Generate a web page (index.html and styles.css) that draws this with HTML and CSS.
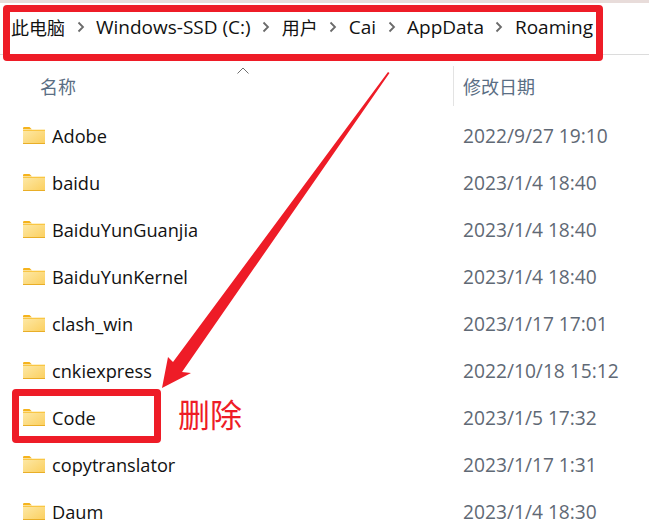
FILE: index.html
```html
<!DOCTYPE html>
<html>

<head>
    <title>Roaming</title>
    <link rel="stylesheet" href="styles.css">
</head>

<body>
    <div class="window">
        <div class="top-strip"></div>
        <div class="breadcrumb">
            <span class="crumb-cjk">此电脑</span>
            <svg class="crumb-sep" viewBox="0 0 8 12"><path d="M1.5 1.5L6 6L1.5 10.5"/></svg>
            <span>Windows-SSD (C:)</span>
            <svg class="crumb-sep" viewBox="0 0 8 12"><path d="M1.5 1.5L6 6L1.5 10.5"/></svg>
            <span class="crumb-cjk">用户</span>
            <svg class="crumb-sep" viewBox="0 0 8 12"><path d="M1.5 1.5L6 6L1.5 10.5"/></svg>
            <span>Cai</span>
            <svg class="crumb-sep" viewBox="0 0 8 12"><path d="M1.5 1.5L6 6L1.5 10.5"/></svg>
            <span>AppData</span>
            <svg class="crumb-sep" viewBox="0 0 8 12"><path d="M1.5 1.5L6 6L1.5 10.5"/></svg>
            <span>Roaming</span>
        </div>

        <div class="list-header">
            <div class="col-name">名称</div>
            <div class="col-date">修改日期</div>
        </div>

        <div class="file-list">
            <div class="file-row">
                <div class="file-name"><svg class="folder" viewBox="0 0 22 17"><use href="#folder-icon"/></svg>Adobe</div>
                <div class="file-date">2022/9/27 19:10</div>
            </div>
            <div class="file-row">
                <div class="file-name"><svg class="folder" viewBox="0 0 22 17"><use href="#folder-icon"/></svg>baidu</div>
                <div class="file-date">2023/1/4 18:40</div>
            </div>
            <div class="file-row">
                <div class="file-name"><svg class="folder" viewBox="0 0 22 17"><use href="#folder-icon"/></svg>BaiduYunGuanjia</div>
                <div class="file-date">2023/1/4 18:40</div>
            </div>
            <div class="file-row">
                <div class="file-name"><svg class="folder" viewBox="0 0 22 17"><use href="#folder-icon"/></svg>BaiduYunKernel</div>
                <div class="file-date">2023/1/4 18:40</div>
            </div>
            <div class="file-row">
                <div class="file-name"><svg class="folder" viewBox="0 0 22 17"><use href="#folder-icon"/></svg>clash_win</div>
                <div class="file-date">2023/1/17 17:01</div>
            </div>
            <div class="file-row">
                <div class="file-name"><svg class="folder" viewBox="0 0 22 17"><use href="#folder-icon"/></svg>cnkiexpress</div>
                <div class="file-date">2022/10/18 15:12</div>
            </div>
            <div class="file-row">
                <div class="file-name"><svg class="folder" viewBox="0 0 22 17"><use href="#folder-icon"/></svg>Code</div>
                <div class="file-date">2023/1/5 17:32</div>
            </div>
            <div class="file-row">
                <div class="file-name"><svg class="folder" viewBox="0 0 22 17"><use href="#folder-icon"/></svg>copytranslator</div>
                <div class="file-date">2023/1/17 1:31</div>
            </div>
            <div class="file-row">
                <div class="file-name"><svg class="folder" viewBox="0 0 22 17"><use href="#folder-icon"/></svg>Daum</div>
                <div class="file-date">2023/1/4 18:30</div>
            </div>
        </div>

        <!-- sort arrow -->
        <svg class="sort-arrow" viewBox="0 0 12 7"><path d="M0.5 6.5L6 1L11.5 6.5"/></svg>

        <!-- red annotations drawn on top of the screenshot -->
        <div class="mark mark-path"></div>
        <div class="mark mark-code"></div>
        <div class="delete-note">删除</div>
        <svg class="pointer" viewBox="0 0 649 525">
            <path d="M389.5 73L182 372L191 373L162 388L168 357L173 362L388 72Z"/>
        </svg>
    </div>

    <svg class="icon-defs" width="0" height="0">
        <defs>
            <linearGradient id="folder-fill" x1="0" y1="0" x2="1" y2="1">
                <stop offset="0" stop-color="#fde9a8"/>
                <stop offset="1" stop-color="#fbcf5e"/>
            </linearGradient>
            <symbol id="folder-icon" viewBox="0 0 22 17">
                <path d="M0 1.2Q0 0 1.2 0H6.5L9 2.5H0Z" fill="#f5b31d"/>
                <rect x="0" y="2.5" width="22" height="14.5" fill="url(#folder-fill)"/>
                <rect x="0" y="3" width="22" height="1" fill="#f9c644"/>
                <rect x="0" y="16" width="22" height="1" fill="#e9ae27"/>
            </symbol>
        </defs>
    </svg>
</body>
</html>
```

FILE: styles.css
```css
html,
body {
    margin: 0;
    padding: 0;
    background-color: #ffffff;
}

.window {
    position: relative;
    width: 649px;
    height: 525px;
    overflow: hidden;
    font-family: "Open Sans", "Noto Sans CJK SC", sans-serif;
    color: #111111;
}

.top-strip {
    height: 3px;
    background-color: #e8dcda;
}

.breadcrumb {
    display: flex;
    align-items: center;
    gap: 11.5px;
    box-sizing: border-box;
    height: 52px;
    padding-left: 11px;
    padding-bottom: 3px;
    border-bottom: 1px solid #dcdcdc;
    font-size: 19px;
    white-space: nowrap;
}

.crumb-cjk {
    font-size: 18px;
}

.crumb-sep {
    width: 8px;
    height: 12px;
    flex: none;
}

.crumb-sep path {
    fill: none;
    stroke: #6a6a6a;
    stroke-width: 1.8;
}

.list-header {
    display: flex;
    align-items: center;
    box-sizing: border-box;
    height: 57px;
    padding-top: 5px;
    font-size: 18px;
    color: #5a6e84;
}

.col-name {
    width: 413px;
    padding-left: 40px;
}

.col-date {
    display: flex;
    align-items: center;
    height: 40px;
    padding-left: 9px;
    border-left: 1px solid #e3e3e3;
}

.file-row {
    display: flex;
    align-items: center;
    height: 47px;
    font-size: 18.2px;
}

.file-name {
    display: flex;
    align-items: center;
    gap: 7px;
    width: 440px;
    padding-left: 23px;
}

.file-date {
    font-size: 19.2px;
    color: #5f6975;
}

.folder {
    width: 22px;
    height: 17px;
    flex: none;
}

.icon-defs {
    position: absolute;
}

.sort-arrow {
    position: absolute;
    left: 237px;
    top: 67px;
    width: 12px;
    height: 7px;
}

.sort-arrow path {
    fill: none;
    stroke: #6e6e6e;
    stroke-width: 1;
}

.mark {
    position: absolute;
    box-sizing: border-box;
    border: 7px solid #ee1c27;
    border-radius: 4px;
}

.mark-path {
    left: 3px;
    top: 5px;
    width: 600px;
    height: 56px;
}

.mark-code {
    left: 12px;
    top: 389px;
    width: 149px;
    height: 54px;
}

.delete-note {
    position: absolute;
    left: 178px;
    top: 390px;
    font-family: "Noto Sans CJK SC", sans-serif;
    font-size: 32px;
    color: #ee1c27;
}

.pointer {
    position: absolute;
    left: 0;
    top: 0;
    width: 649px;
    height: 525px;
}

.pointer path {
    fill: #ee1c27;
}
```
